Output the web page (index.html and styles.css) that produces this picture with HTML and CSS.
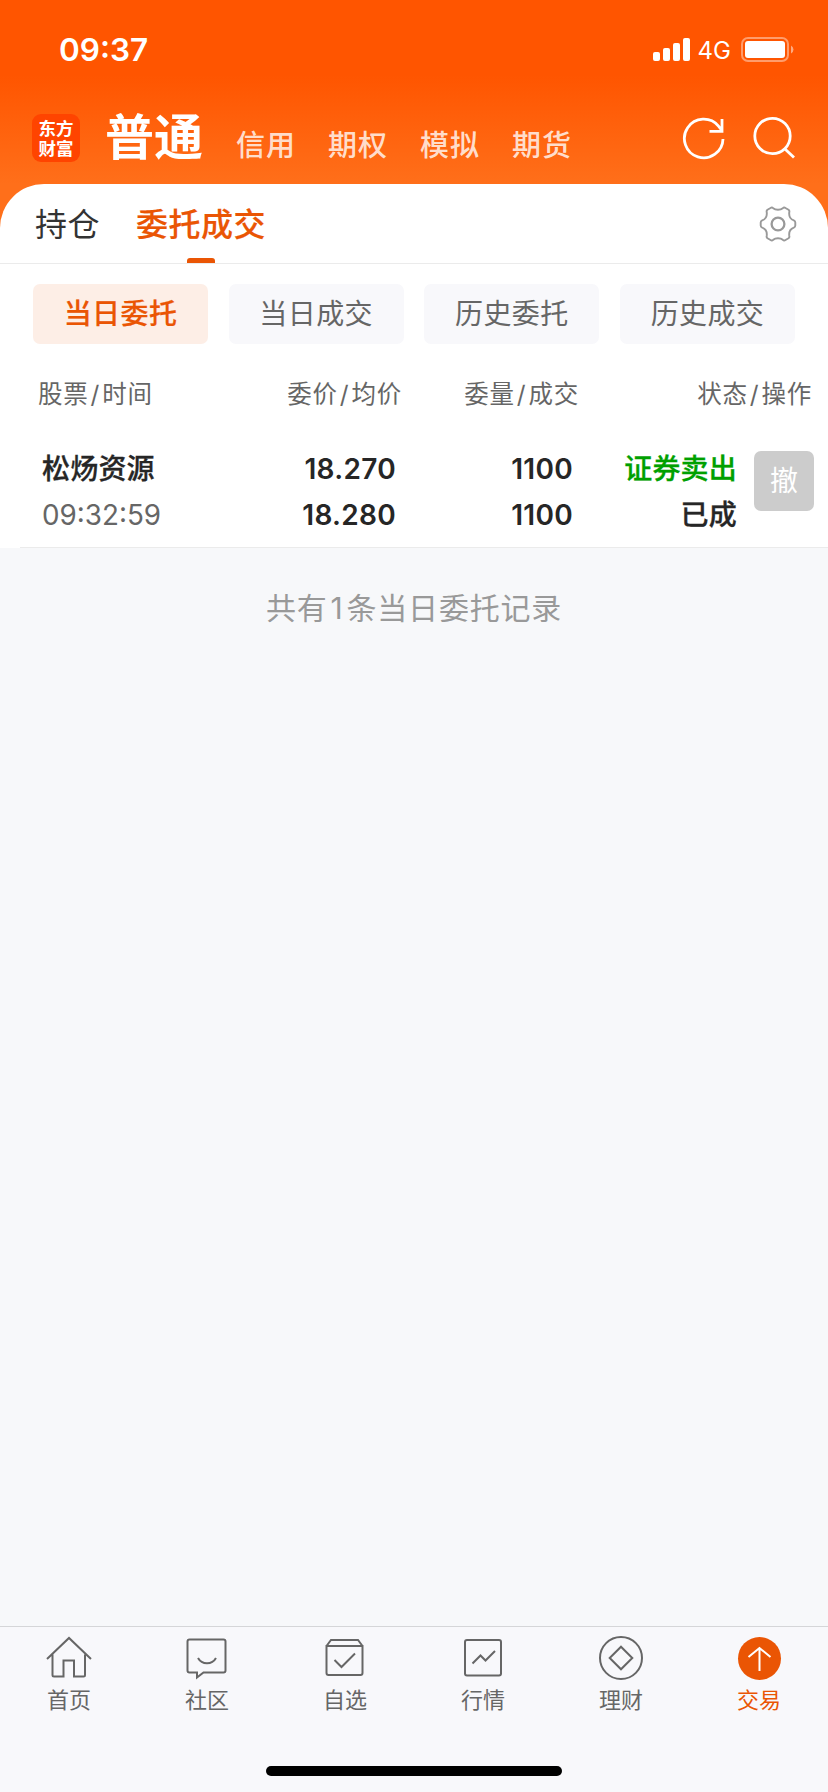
FILE: index.html
```
<!DOCTYPE html>
<html lang="zh-CN">
<head>
    <meta charset="UTF-8">
    <meta name="viewport" content="width=device-width, initial-scale=1.0">
    <title>委托成交</title>
    <link rel="stylesheet" href="styles.css">
</head>
<body>
    <div class="header">
        <div class="status">
            <span class="clock">09:37</span>
            <svg class="signal" width="38" height="24" viewBox="0 0 38 24" fill="#fff">
                <rect x="0" y="14" width="7" height="9" rx="2"/>
                <rect x="10" y="10" width="7" height="13" rx="2"/>
                <rect x="20" y="5" width="7" height="18" rx="2"/>
                <rect x="30" y="0" width="7" height="23" rx="2"/>
            </svg>
            <span class="net">4G</span>
            <svg width="54" height="26" viewBox="0 0 54 26">
                <rect x="1" y="1" width="46" height="23" rx="6" fill="none" stroke="#fff" stroke-opacity=".42" stroke-width="2"/>
                <rect x="4" y="4" width="40" height="17" rx="3" fill="#fff"/>
                <path d="M50 8.5a4.5 4.5 0 0 1 0 8z" fill="#fff" fill-opacity=".5"/>
            </svg>
        </div>
        <div class="nav">
            <div class="logo">东方财富</div>
            <span class="nav-on">普通</span>
            <span class="nav-item">信用</span>
            <span class="nav-item">期权</span>
            <span class="nav-item">模拟</span>
            <span class="nav-item">期货</span>
            <div class="nav-icons">
                <svg width="44" height="44" viewBox="0 0 44 44" fill="none" stroke="#fff" stroke-width="2.8">
                    <path d="M41 23A19.3 19.3 0 1 1 36.500 10.1L39.500 14M40 3v12.3H27.500"/>
                </svg>
                <svg width="44" height="44" viewBox="0 0 44 44" fill="none" stroke="#fff" stroke-width="2.8">
                    <circle cx="20.5" cy="20" r="17.7"/>
                    <path d="M33 33l9 8.6"/>
                </svg>
            </div>
        </div>
    </div>

    <div class="card">
        <div class="tabs">
            <span class="tab">持仓</span>
            <span class="tab tab-on">委托成交</span>
            <svg class="gear" width="38" height="38" viewBox="-19 -19 38 38" fill="none" stroke="#999" stroke-width="1.9" stroke-linejoin="round">
                <circle r="6.4" stroke-width="2.3"/>
                <path d="M-7.5 -16Q-6 -17 -4.8 -15.800C-2.500 -13.800 2.500 -13.800 4.800 -15.800Q6 -17 7.500 -16L10.500 -14.200Q11.700 -13.300 11.300 -12C10.700 -7.500 12 -5 15.800 -3.600Q17.300 -3 17.300 -1.500V1.500Q17.300 3 15.800 3.600C12 5 10.700 7.500 11.300 12Q11.700 13.300 10.500 14.200L7.500 16Q6 17 4.800 15.800C2.500 13.800 -2.500 13.800 -4.800 15.800Q-6 17 -7.500 16L-10.500 14.200Q-11.700 13.300 -11.300 12C-10.700 7.500 -12 5 -15.800 3.600Q-17.300 3 -17.300 1.500V-1.500Q-17.300 -3 -15.800 -3.600C-12 -5 -10.700 -7.500 -11.300 -12Q-11.700 -13.300 -10.500 -14.200Z"/>
            </svg>
        </div>
        <div class="filters">
            <span class="filter filter-on">当日委托</span>
            <span class="filter">当日成交</span>
            <span class="filter">历史委托</span>
            <span class="filter">历史成交</span>
        </div>
        <div class="thead">
            <span>股票<i>/</i>时间</span>
            <span>委价<i>/</i>均价</span>
            <span>委量<i>/</i>成交</span>
            <span>状态<i>/</i>操作</span>
        </div>
        <div class="row">
            <div class="cell name"><b>松炀资源</b><span class="time">09:32:59</span></div>
            <div class="cell num"><b>18.270</b><b>18.280</b></div>
            <div class="cell num"><b>1100</b><b>1100</b></div>
            <div class="cell"><b class="sell">证券卖出</b><b>已成</b></div>
            <span class="cancel">撤</span>
        </div>
    </div>

    <p class="total">共有<span>1</span>条当日委托记录</p>

    <div class="tabbar">
        <div class="bar-item">
            <svg width="48" height="48" viewBox="0 0 48 48">
                <path d="M2 25L24 4l22 21M7.5 20.5V41q0 1.500 1.500 1.500h9.500V26.500H29v16h9.500q1.500 0 1.500-1.500V20.500"/>
            </svg>
            <span>首页</span>
        </div>
        <div class="bar-item">
            <svg width="48" height="48" viewBox="0 0 48 48">
                <path d="M6.500 5.500h34q2 0 2 2v29q0 2-2 2H20.500l-6.500 5v-5H6.500q-2 0-2-2v-29q0-2 2-2zM15 24c4 7 14 7 18 0"/>
            </svg>
            <span>社区</span>
        </div>
        <div class="bar-item">
            <svg width="48" height="48" viewBox="0 0 48 48">
                <path d="M5.500 12L10 6h27l4.500 6M5.500 12h36v27q0 2-2 2h-32q-2 0-2-2zM13.500 26l7 7L34 19.500"/>
            </svg>
            <span>自选</span>
        </div>
        <div class="bar-item">
            <svg width="48" height="48" viewBox="0 0 48 48">
                <rect x="6" y="6" width="36" height="35.500" rx="2"/>
                <path d="M13.500 29.500l8-8 5 5L36 17"/>
            </svg>
            <span>行情</span>
        </div>
        <div class="bar-item">
            <svg width="48" height="48" viewBox="0 0 48 48">
                <circle cx="24" cy="24" r="21"/>
                <path d="M24 12.700L35.300 24 24 35.300 12.700 24z"/>
            </svg>
            <span>理财</span>
        </div>
        <div class="bar-item bar-on">
            <svg width="48" height="48" viewBox="0 0 48 48">
                <circle cx="24.500" cy="24.500" r="21.500" fill="#ea5504" stroke="none"/>
                <path d="M24.500 37V14.500M13.500 23l11-9 11 9" stroke="#fff"/>
            </svg>
            <span>交易</span>
        </div>
    </div>
    <div class="home"></div>
</body>
</html>
```
FILE: styles.css
```
*{
    box-sizing: border-box;
}
body{
    margin: 0;
    width: 828px;
    height: 1792px;
    display: flex;
    flex-direction: column;
    background-color: #f7f8fa;
    color: #262626;
    font-family: 'Inter', 'Noto Sans CJK SC', sans-serif;
    overflow: hidden;
}
svg{
    display: block;
    flex-shrink: 0;
}
.header{
    height: 240px;
    flex-shrink: 0;
    background: linear-gradient(#ff5500 75px, #ff6f1a 184px);
    color: white;
}
.status{
    height: 99px;
    padding: 0 33px 0 59px;
    display: flex;
    align-items: center;
}
.clock{
    font-size: 31.5px;
    font-weight: 600;
    margin-right: auto;
}
.net{
    font-size: 24px;
    margin: 2px 10px 0 7px;
}
.nav{
    display: flex;
    height: 84px;
    margin-top: 1px;
    padding-left: 32px;
    padding-right: 32px;
}
.logo{
    width: 48px;
    height: 48px;
    margin-top: 14px;
    margin-right: 25px;
    padding: 4px 6px;
    border-radius: 9px;
    background-color: #ff4400;
    text-align: center;
    font-family: 'Noto Sans CJK SC', sans-serif;
    font-weight: 700;
    font-size: 17.5px;
    line-height: 20px;
}
.nav-on{
    font-size: 49px;
    line-height: 76px;
    font-weight: bold;
    margin-right: 33px;
}
.nav-item{
    font-size: 29px;
    line-height: 92px;
    letter-spacing: 1px;
    font-weight: 500;
    width: 92px;
    color: rgba(255,255,255,0.8);
}
.nav-icons{
    display: flex;
    gap: 26px;
    margin: 16px 0 0 auto;
}
.card{
    height: 364px;
    margin-top: -56px;
    flex-shrink: 0;
    background-color: white;
    border-radius: 44px 44px 0 0;
}
.tabs{
    height: 80px;
    border-bottom: 1px solid #ebebeb;
    padding: 0 31px 0 35px;
    display: flex;
    align-items: center;
}
.tab{
    font-size: 32px;
    line-height: 79px;
    letter-spacing: 0.5px;
    margin-right: 36px;
    padding-top: 1px;
    color: #333;
}
.tab-on{
    font-weight: 500;
    -webkit-text-stroke: 0.2px;
    color: #ea5504;
    display: flex;
    flex-direction: column;
    align-items: center;
}
.tab-on::after{
    content: "";
    width: 28px;
    height: 5px;
    margin-top: -6px;
    border-radius: 3px 3px 0 0;
    background-color: #ea5504;
}
.gear{
    margin-left: auto;
}
.filters{
    display: flex;
    justify-content: space-between;
    padding: 20px 33px 0 33px;
}
.filter{
    width: 175px;
    height: 60px;
    border-radius: 7px;
    background-color: #f8f8fb;
    color: #666;
    font-size: 28px;
    letter-spacing: 0.4px;
    line-height: 61px;
    text-align: center;
}
.filter-on{
    background-color: #fdeee6;
    color: #ea5504;
    font-weight: 500;
    -webkit-text-stroke: 0.2px;
}
.thead{
    display: grid;
    grid-template-columns: 163px 201px 177px 233px;
    padding: 30px 0 1px 38px;
    font-size: 24.5px;
    letter-spacing: 0.8px;
    line-height: 40px;
    color: #666;
    text-align: right;
}
.thead span:first-child{
    text-align: left;
}
.thead i{
    font-style: normal;
    margin: 0 2px;
}
.row{
    display: grid;
    grid-template-columns: 153px 201px 177px 164px 60px;
    padding: 31px 0 0 42px;
    height: 133px;
    /* divider starts 20px in from the left */
    background: linear-gradient(#ebebeb, #ebebeb) 20px 100% / 100% 1px no-repeat;
}
.cell{
    display: flex;
    flex-direction: column;
    text-align: right;
    font-size: 28px;
    line-height: 46px;
}
.cell b{
    font-weight: 500;
    letter-spacing: 0.2px;
    -webkit-text-stroke: 0.3px;
}
.num b{
    font-weight: 600;
    letter-spacing: 0.3px;
    -webkit-text-stroke: 0;
}
.name{
    text-align: left;
}
.time{
    color: #666;
    font-size: 27.8px;
}
.cell .sell{
    color: #00a000;
}
.cancel{
    width: 60px;
    height: 60px;
    margin: 5px 0 0 17px;
    border-radius: 7px;
    background-color: #ccc;
    color: white;
    font-size: 28px;
    line-height: 61px;
    text-align: center;
}
.total{
    margin: 38px 0 0 0;
    text-align: center;
    font-size: 30px;
    line-height: 44px;
    letter-spacing: 0.8px;
    color: #999;
}
.total span{
    margin: 0 3px;
}
.tabbar{
    height: 140px;
    margin-top: auto;
    flex-shrink: 0;
    border-top: 1px solid #d5d6d8;
    background-color: #f8f8fb;
    display: flex;
}
.bar-item{
    width: 138px;
    padding-top: 7px;
    display: flex;
    flex-direction: column;
    align-items: center;
    font-size: 22px;
    line-height: 36px;
    color: #666;
}
.bar-item svg{
    fill: none;
    stroke: #666;
    stroke-width: 2;
}
.bar-on{
    color: #ea5504;
}
.home{
    height: 26px;
    flex-shrink: 0;
    background-color: #f8f8fb;
}
.home::before{
    content: "";
    display: block;
    width: 296px;
    height: 10px;
    margin: 0 auto;
    border-radius: 5px;
    background-color: black;
}
```
